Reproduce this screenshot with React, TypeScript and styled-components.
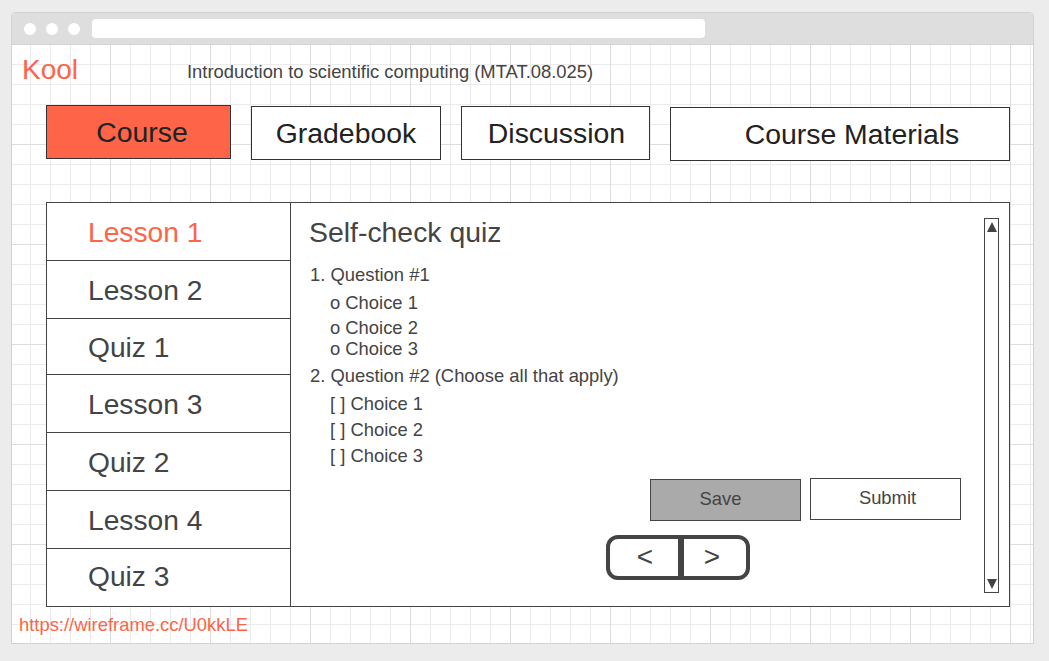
import React from "react";
import styled, { createGlobalStyle } from "styled-components";

const Global = createGlobalStyle`
  html, body { margin: 0; padding: 0; }
  body {
    background: #ececec;
    font-family: "Liberation Sans", Arial, sans-serif;
  }
  * { box-sizing: border-box; }
`;

const ACCENT = "#fd6448";

const Page = styled.div`
  padding: 12px 0 0 11px;
`;

const Frame = styled.div`
  width: 1023px;
  height: 632px;
  border: 1px solid #d2d2d2;
  border-radius: 4px 4px 0 0;
  overflow: hidden;
  display: flex;
  flex-direction: column;
  background: #fff;
`;

const TitleBar = styled.div`
  height: 32px;
  flex: none;
  background: #dedede;
  border-bottom: 1px solid #d4d4d4;
  display: flex;
  align-items: center;
  padding-left: 12px;
  gap: 10px;
`;

const Dot = styled.span`
  width: 12px;
  height: 12px;
  border-radius: 50%;
  background: #fff;
  flex: none;
`;

const AddressBar = styled.div`
  margin-left: 2px;
  width: 613px;
  height: 19px;
  border-radius: 4px;
  background: #fff;
`;

const Canvas = styled.div`
  flex: 1;
  overflow: hidden;
  background-color: #fff;
  background-image:
    linear-gradient(to right, #dddddd 1px, transparent 1px),
    linear-gradient(to bottom, #dddddd 1px, transparent 1px),
    linear-gradient(to right, #ebebeb 1px, transparent 1px),
    linear-gradient(to bottom, #ebebeb 1px, transparent 1px);
  background-size: 100px 100px, 100px 100px, 20px 20px, 20px 20px;
  background-position: 98px 0, 0 99px, 18px 0, 0 19px;
  display: flex;
  flex-direction: column;
  padding-top: 9px;
`;

const Header = styled.div`
  display: flex;
  align-items: flex-start;
  padding-left: 10px;
`;

const Logo = styled.div`
  width: 165px;
  font-size: 28px;
  line-height: 32px;
  color: ${ACCENT};
`;

const CourseTitle = styled.div`
  margin-top: 7px;
  font-size: 18.4px;
  line-height: 21px;
  color: #444;
`;

const Tabs = styled.div`
  margin-top: 19px;
  padding-left: 34px;
  display: flex;
  align-items: flex-start;
  height: 56px;
`;

const Tab = styled.div<{ $w: number; $mt?: number; $ml?: number; $active?: boolean; $pl?: number }>`
  width: ${(p) => p.$w}px;
  height: 54px;
  margin-top: ${(p) => p.$mt ?? 0}px;
  margin-left: ${(p) => p.$ml ?? 0}px;
  padding-left: ${(p) => p.$pl ?? 0}px;
  border: 1px solid #333;
  background: ${(p) => (p.$active ? ACCENT : "#fff")};
  color: #222;
  font-size: 28.4px;
  display: flex;
  align-items: center;
  justify-content: center;
  flex: none;
`;

const Panel = styled.div`
  margin-top: 41px;
  margin-left: 34px;
  width: 964px;
  height: 405px;
  border: 1px solid #444;
  background: #fff;
  display: flex;
  flex: none;
`;

const Sidebar = styled.div`
  width: 244px;
  border-right: 1px solid #444;
  display: flex;
  flex-direction: column;
  flex: none;
`;

const NavItem = styled.div<{ $h: number; $active?: boolean; $last?: boolean; $nudge?: number }>`
  height: ${(p) => p.$h}px;
  border-bottom: ${(p) => (p.$last ? "none" : "1px solid #444")};
  padding-left: 41px;
  padding-top: ${(p) => Math.max(p.$nudge ?? 0, 0)}px;
  padding-bottom: ${(p) => Math.max(-(p.$nudge ?? 0), 0)}px;
  display: flex;
  align-items: center;
  font-size: 28.2px;
  color: ${(p) => (p.$active ? ACCENT : "#444")};
  flex: none;
`;

const QuizArea = styled.div`
  flex: 1;
  display: flex;
`;

const QuizBody = styled.div`
  flex: 1;
  padding: 13px 0 0 18px;
  display: flex;
  flex-direction: column;
`;

const QuizTitle = styled.div`
  font-size: 28.4px;
  line-height: 32px;
  color: #444;
`;

const Line = styled.div<{ $mt?: number; $indent?: boolean }>`
  margin-top: ${(p) => p.$mt ?? 0}px;
  padding-left: ${(p) => (p.$indent ? 21 : 1)}px;
  font-size: 18.4px;
  line-height: 21px;
  color: #444;
`;

const ButtonRow = styled.div`
  margin-top: 12px;
  padding-right: 23px;
  display: flex;
  justify-content: flex-end;
  align-items: flex-start;
  gap: 9px;
`;

const Button = styled.div<{ $primary?: boolean; $mt?: number }>`
  width: 151px;
  height: 42px;
  margin-top: ${(p) => p.$mt ?? 0}px;
  border: 1px solid #444;
  background: ${(p) => (p.$primary ? "#aaaaaa" : "#fff")};
  color: #444;
  font-size: 18.4px;
  display: flex;
  align-items: center;
  justify-content: center;
  padding-right: ${(p) => (p.$primary ? 10 : 0)}px;
  padding-left: ${(p) => (p.$primary ? 0 : 4)}px;
  padding-bottom: 2px;
`;

const PagerRow = styled.div`
  margin-top: 14px;
  padding-left: 297px;
  display: flex;
`;

const Pager = styled.div`
  width: 144px;
  height: 45px;
  border: 4px solid #444;
  border-radius: 12px;
  display: flex;
`;

const PagerButton = styled.div<{ $divider?: boolean }>`
  width: ${(p) => (p.$divider ? "74px" : "auto")};
  flex: ${(p) => (p.$divider ? "none" : "1")};
  border-right: ${(p) => (p.$divider ? "6px solid #444" : "none")};
  padding-right: ${(p) => (p.$divider ? 0 : 6)}px;
  padding-left: ${(p) => (p.$divider ? 2 : 0)}px;
  display: flex;
  align-items: center;
  justify-content: center;
  font-size: 28px;
  color: #444;
  padding-bottom: 2px;
`;

const ScrollTrack = styled.div`
  width: 15px;
  margin: 15px 10px 13px 0;
  border: 1px solid #444;
  display: flex;
  flex-direction: column;
  justify-content: space-between;
  align-items: center;
  padding: 3px 0;
  flex: none;
`;

const Arrow = styled.span<{ $down?: boolean }>`
  width: 0;
  height: 0;
  border-left: 5px solid transparent;
  border-right: 5px solid transparent;
  ${(p) =>
    p.$down ? "border-top: 10px solid #444;" : "border-bottom: 10px solid #444;"}
`;

const Footer = styled.div`
  margin-top: 7px;
  padding-left: 7px;
  font-size: 18.4px;
  line-height: 21px;
  color: ${ACCENT};
`;

const navItems = [
  { label: "Lesson 1", h: 58, active: true, nudge: 2 },
  { label: "Lesson 2", h: 58, nudge: 2 },
  { label: "Quiz 1", h: 56, nudge: 2 },
  { label: "Lesson 3", h: 58, nudge: 2 },
  { label: "Quiz 2", h: 58, nudge: 2 },
  { label: "Lesson 4", h: 58, nudge: 2 },
  { label: "Quiz 3", h: 57, last: true, nudge: -2 },
];

export default function App() {
  return (
    <Page>
      <Global />
      <Frame>
        <TitleBar>
          <Dot />
          <Dot />
          <Dot />
          <AddressBar />
        </TitleBar>
        <Canvas>
          <Header>
            <Logo>Kool</Logo>
            <CourseTitle>Introduction to scientific computing (MTAT.08.025)</CourseTitle>
          </Header>
          <Tabs>
            <Tab $w={185} $active $pl={7}>Course</Tab>
            <Tab $w={190} $ml={20} $mt={1}>Gradebook</Tab>
            <Tab $w={189} $ml={20} $mt={1} $pl={2}>Discussion</Tab>
            <Tab $w={340} $ml={20} $mt={2} $pl={24}>Course Materials</Tab>
          </Tabs>
          <Panel>
            <Sidebar>
              {navItems.map((n) => (
                <NavItem key={n.label} $h={n.h} $active={n.active} $last={n.last} $nudge={n.nudge}>
                  {n.label}
                </NavItem>
              ))}
            </Sidebar>
            <QuizArea>
              <QuizBody>
                <QuizTitle>Self-check quiz</QuizTitle>
                <Line $mt={16}>1. Question #1</Line>
                <Line $mt={7} $indent>o Choice 1</Line>
                <Line $mt={4} $indent>o Choice 2</Line>
                <Line $indent>o Choice 3</Line>
                <Line $mt={6}>2. Question #2 (Choose all that apply)</Line>
                <Line $mt={7} $indent>[ ] Choice 1</Line>
                <Line $mt={5} $indent>[ ] Choice 2</Line>
                <Line $mt={5} $indent>[ ] Choice 3</Line>
                <ButtonRow>
                  <Button $primary $mt={1}>Save</Button>
                  <Button>Submit</Button>
                </ButtonRow>
                <PagerRow>
                  <Pager>
                    <PagerButton $divider>&lt;</PagerButton>
                    <PagerButton>&gt;</PagerButton>
                  </Pager>
                </PagerRow>
              </QuizBody>
              <ScrollTrack>
                <Arrow />
                <Arrow $down />
              </ScrollTrack>
            </QuizArea>
          </Panel>
          <Footer>https://wireframe.cc/U0kkLE</Footer>
        </Canvas>
      </Frame>
    </Page>
  );
}
